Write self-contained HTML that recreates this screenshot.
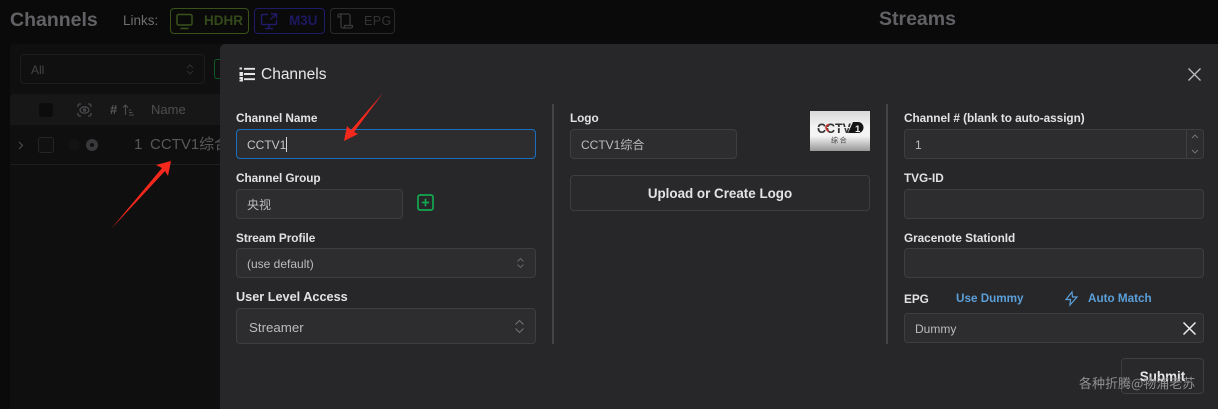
<!DOCTYPE html>
<html><head><meta charset="utf-8">
<style>
html,body{margin:0;padding:0;width:1218px;height:409px;overflow:hidden;background:#0a0a0a}
body{position:relative;font-family:"Liberation Sans","Noto Sans CJK SC",sans-serif}
.a{position:absolute;box-sizing:border-box;white-space:nowrap}
.lab{position:absolute;white-space:nowrap;font-size:11.8px;font-weight:bold;color:#e2e2e4;line-height:16px;letter-spacing:-.05px}
.in{position:absolute;box-sizing:border-box;background:#2d2d2f;border:1px solid #3e3e41;border-radius:4px;height:30px;color:#bcbcbe;font-size:12px;line-height:30px;padding-left:10px;white-space:nowrap}
svg{position:absolute;overflow:visible}
</style></head><body>
<div class="a" style="left:10px;top:7px;font-size:19.500px;font-weight:bold;color:#626266;line-height:26px">Channels</div>
<div class="a" style="left:123px;top:13px;font-size:13.500px;color:#6e6e71;line-height:16px">Links:</div>
<div class="a" style="left:170px;top:8px;width:79px;height:26px;border:1px solid #3a5219;border-radius:4px"></div>
<svg style="left:176px;top:13px" width="18" height="17" fill="none" stroke="#3a5219" stroke-width="1.500"><rect x="1" y="1.500" width="15" height="10.500" rx="1.500"/><path d="M4.500 15.500h8"/></svg>
<div class="a" style="left:204px;top:12px;font-size:13.500px;font-weight:bold;color:#34491a;line-height:18px">HDHR</div>
<div class="a" style="left:254px;top:8px;width:71px;height:26px;border:1px solid #1f1b66;border-radius:4px"></div>
<svg style="left:260px;top:13px" width="18" height="17" fill="none" stroke="#1f1b66" stroke-width="1.500"><path d="M8 1.500H2.500a1 1 0 0 0-1 1v8a1 1 0 0 0 1 1h13a1 1 0 0 0 1-1V7M11 1h5.500v4.500M16 1.500l-5.500 5M9 11.500v3.500M5 15.500h8"/></svg>
<div class="a" style="left:289px;top:12px;font-size:13.500px;font-weight:bold;color:#1c1960;line-height:18px">M3U</div>
<div class="a" style="left:330px;top:8px;width:65px;height:26px;border:1px solid #2a2a2c;border-radius:4px"></div>
<svg style="left:337px;top:13px" width="17" height="16" fill="none" stroke="#39393b" stroke-width="1.300"><path d="M2.500 1H11a2 2 0 0 1 2 2v9.500M4 4v9a2 2 0 0 0 2 2h8a1.500 1.500 0 0 0 1.500-1.500v-1H7.500v1a1.500 1.500 0 0 1-1.500 1.500M2.500 1A1.500 1.500 0 0 0 1 2.500V4h3V2.500A1.500 1.500 0 0 0 2.500 1"/></svg>
<div class="a" style="left:364px;top:12px;font-size:12.500px;color:#343436;line-height:18px;letter-spacing:.4px">EPG</div>
<div class="a" style="left:879px;top:6px;font-size:19.500px;font-weight:bold;color:#626266;line-height:26px">Streams</div>

<!-- background panel -->
<div class="a" style="left:10px;top:44px;width:215px;height:365px;background:#0f0f10;border-radius:4px 0 0 0"></div>
<div class="a" style="left:20px;top:54px;width:185px;height:30px;background:#101011;border:1px solid #1d1d1e;border-radius:4px;color:#454547;font-size:12px;line-height:30px;padding-left:10px">All</div>
<svg style="left:186px;top:64px" width="8" height="11" fill="none" stroke="#2e2e30"><path d="M1 4l3-3 3 3M1 7l3 3 3-3"/></svg>
<div class="a" style="left:214px;top:59px;width:10px;height:20px;border:1px solid #0c5b28;border-right:0;border-radius:3px 0 0 3px"></div>
<div class="a" style="left:10px;top:94px;width:215px;height:31px;background:#171718;border-radius:4px 4px 0 0"></div>
<div class="a" style="left:39px;top:103px;width:14px;height:14px;background:#0c0c0d;border-radius:3px"></div>
<svg style="left:77px;top:103px" width="15" height="14" fill="none" stroke="#4a4a4c" stroke-width="1.300"><path d="M1 4V2.500A1.500 1.500 0 0 1 2.500 1H4M11 1h1.500A1.500 1.500 0 0 1 14 2.500V4M14 10v1.500a1.500 1.500 0 0 1-1.500 1.500H11M4 13H2.500A1.500 1.500 0 0 1 1 11.500V10"/><ellipse cx="7.500" cy="7" rx="4.500" ry="3.200"/><circle cx="7.500" cy="7" r="1.100"/></svg>
<div class="a" style="left:110px;top:102px;font-size:13px;font-weight:bold;color:#58585a;line-height:16px">#</div>
<svg style="left:122px;top:104px" width="13" height="12" fill="none" stroke="#4e4e50" stroke-width="1.100"><path d="M3.500 11V1M1 3.500L3.500 1 6 3.500M7 6h2M7 8.500h3.500M7 11h5"/></svg>
<div class="a" style="left:151px;top:102px;font-size:13px;color:#4e4e50;line-height:16px">Name</div>
<div class="a" style="left:10px;top:164px;width:215px;height:1px;background:#1e1e1f"></div>
<svg style="left:18px;top:141px" width="6" height="9" fill="none" stroke="#4e4e50" stroke-width="1.100"><path d="M1 1l3.500 3.500L1 8"/></svg>
<div class="a" style="left:38px;top:137px;width:16px;height:16px;border:1px solid #252526;border-radius:3px;background:#111"></div>
<div class="a" style="left:68px;top:139px;width:12px;height:12px;border-radius:6px;background:#131314"></div>
<div class="a" style="left:86px;top:139px;width:12px;height:12px;border-radius:6px;background:#39393b"></div>
<div class="a" style="left:90px;top:143px;width:4px;height:4px;border-radius:2px;background:#101011"></div>
<div class="a" style="left:134px;top:135px;font-size:15px;color:#58585a;line-height:20px">1</div>
<div class="a" style="left:150px;top:135px;width:70px;overflow:hidden;font-size:15px;color:#58585a;line-height:20px">CCTV1综合</div>

<!-- Modal -->
<div class="a" style="left:220px;top:44px;width:998px;height:365px;background:#27272a;border-radius:5px 0 0 0"></div>
<svg style="left:239px;top:67px" width="16" height="14" fill="none" stroke="#e6e6e8" stroke-width="1.900"><path d="M5 1.800h11M5 7h11M5 12.200h11M.5 1.500h2.500M.5 6h2.500v2H.5M.5 11h2.500v2.500H.5"/></svg>
<div class="a" style="left:261px;top:66px;font-size:15.500px;color:#e8e8ea;line-height:18px">Channels</div>
<svg style="left:1188px;top:68px" width="13" height="13" fill="none" stroke="#bdbdbf" stroke-width="1.300"><path d="M.5.500l12 12M12.500.500l-12 12"/></svg>

<div class="lab" style="left:236px;top:110px">Channel Name</div>
<div class="in" style="left:236px;top:129px;width:300px;border-color:#1b6fbd;color:#c4c4c6">CCTV1<span style="display:inline-block;width:1px;height:15px;background:#d5d5d5;vertical-align:-3px"></span></div>
<div class="lab" style="left:236px;top:170px">Channel Group</div>
<div class="in" style="left:236px;top:189px;width:167px;font-size:12px">央视</div>
<svg style="left:417px;top:194px" width="18" height="18" fill="none" stroke="#13a84f" stroke-width="1.700"><rect x="1" y="1" width="15" height="15" rx="2"/><path d="M8.500 4.800v7.400M4.800 8.500h7.400"/></svg>
<div class="lab" style="left:236px;top:230px">Stream Profile</div>
<div class="in" style="left:236px;top:248px;width:300px">(use default)</div>
<svg style="left:517px;top:258px" width="7" height="10" fill="none" stroke="#6a6a6d" stroke-width=".9"><path d="M.5 3.500l3-3 3 3M.5 6.500l3 3 3-3"/></svg>
<div class="lab" style="left:236px;top:289px;font-size:12.700px;letter-spacing:0">User Level Access</div>
<div class="in" style="left:236px;top:308px;width:300px;height:36px;line-height:37px;font-size:13.300px;padding-left:12px">Streamer</div>
<svg style="left:515px;top:320px" width="9" height="13" fill="none" stroke="#78787b" stroke-width=".9"><path d="M.5 4.500l4-4 4 4M.5 8.500l4 4 4-4"/></svg>
<div class="a" style="left:552px;top:104px;width:2px;height:240px;background:#444447"></div>

<div class="lab" style="left:570px;top:110px">Logo</div>
<div class="in" style="left:570px;top:129px;width:167px">CCTV1综合</div>
<div class="a" style="left:810px;top:111px;width:60px;height:40px;background:linear-gradient(#d8d8d8 0,#f4f4f4 40%,#f4f4f4 62%,#989898 100%)"></div>
<svg style="left:810px;top:111px" width="60" height="40"><text x="7" y="22" font-size="13.500" font-weight="bold" fill="#333" textLength="34" lengthAdjust="spacingAndGlyphs" font-family="Liberation Sans">CCTV</text><rect x="7" y="16" width="33" height="1.100" fill="#eee"/><path d="M19 13.500a3.500 3.500 0 0 0-3 3.200 3.500 3.500 0 0 0 3 3.200" fill="none" stroke="#c8302c" stroke-width="1.700"/><path d="M38 22L43 11h5a5.500 5.500 0 0 1 0 11z" fill="#141414"/><text x="45" y="21" font-size="9.500" font-weight="bold" fill="#eee" font-family="Liberation Sans">1</text><text x="21" y="31.500" font-size="7" fill="#444" font-family="Noto Sans CJK SC">综 合</text></svg>
<div class="a" style="left:570px;top:175px;width:300px;height:36px;background:#29292b;border:1px solid #3e3e41;border-radius:4px;text-align:center;color:#e4e4e6;font-size:13.400px;font-weight:bold;line-height:35px">Upload or Create Logo</div>
<div class="a" style="left:886px;top:104px;width:2px;height:240px;background:#444447"></div>

<div class="lab" style="left:904px;top:110px">Channel # (blank to auto-assign)</div>
<div class="in" style="left:904px;top:129px;width:300px">1</div>
<div class="a" style="left:1186px;top:130px;width:1px;height:28px;background:#3e3e41"></div>
<svg style="left:1191px;top:134px" width="8" height="20" fill="none" stroke="#78787b" stroke-width=".9"><path d="M1 4l3-3 3 3M1 16l3 3 3-3"/></svg>
<div class="lab" style="left:904px;top:170px">TVG-ID</div>
<div class="in" style="left:904px;top:189px;width:300px"></div>
<div class="lab" style="left:904px;top:230px">Gracenote StationId</div>
<div class="in" style="left:904px;top:248px;width:300px"></div>
<div class="lab" style="left:904px;top:291px">EPG</div>
<div class="a" style="left:956px;top:291px;font-size:11.700px;font-weight:bold;color:#5b9fd8;line-height:16px">Use Dummy</div>
<svg style="left:1065px;top:291px" width="13" height="15" fill="none" stroke="#5b9fd8" stroke-width="1.200"><path d="M7 1L1 8.500h4.500L5 14l7-8H7.500z"/></svg>
<div class="a" style="left:1088px;top:291px;font-size:11.700px;font-weight:bold;color:#5b9fd8;line-height:16px">Auto Match</div>
<div class="in" style="left:904px;top:313px;width:300px">Dummy</div>
<svg style="left:1183px;top:322px" width="13" height="13" fill="none" stroke="#eee" stroke-width="1.500"><path d="M.5.500l12 12M12.500.500l-12 12"/></svg>
<div class="a" style="left:1121px;top:358px;width:83px;height:36px;background:#29292b;border:1px solid #3e3e41;border-radius:4px;text-align:center;color:#e8e8ea;font-size:13.400px;font-weight:bold;line-height:35px">Submit</div>
<div class="a" style="left:1079px;top:374px;font-size:13px;color:#9a9a9c;line-height:17px;font-family:'Noto Sans CJK SC','Liberation Sans',sans-serif;opacity:.92">各种折腾@物浦老苏</div>

<!-- Arrows -->
<svg style="left:0;top:0" width="1218" height="409"><path d="M111 229L162 168 156 165 171 161 168 176 165 171Z" fill="#f5281e"/><path d="M383 93L354 132 358 134 344 141 347 126 351 130Z" fill="#f5281e"/></svg>
</body></html>
